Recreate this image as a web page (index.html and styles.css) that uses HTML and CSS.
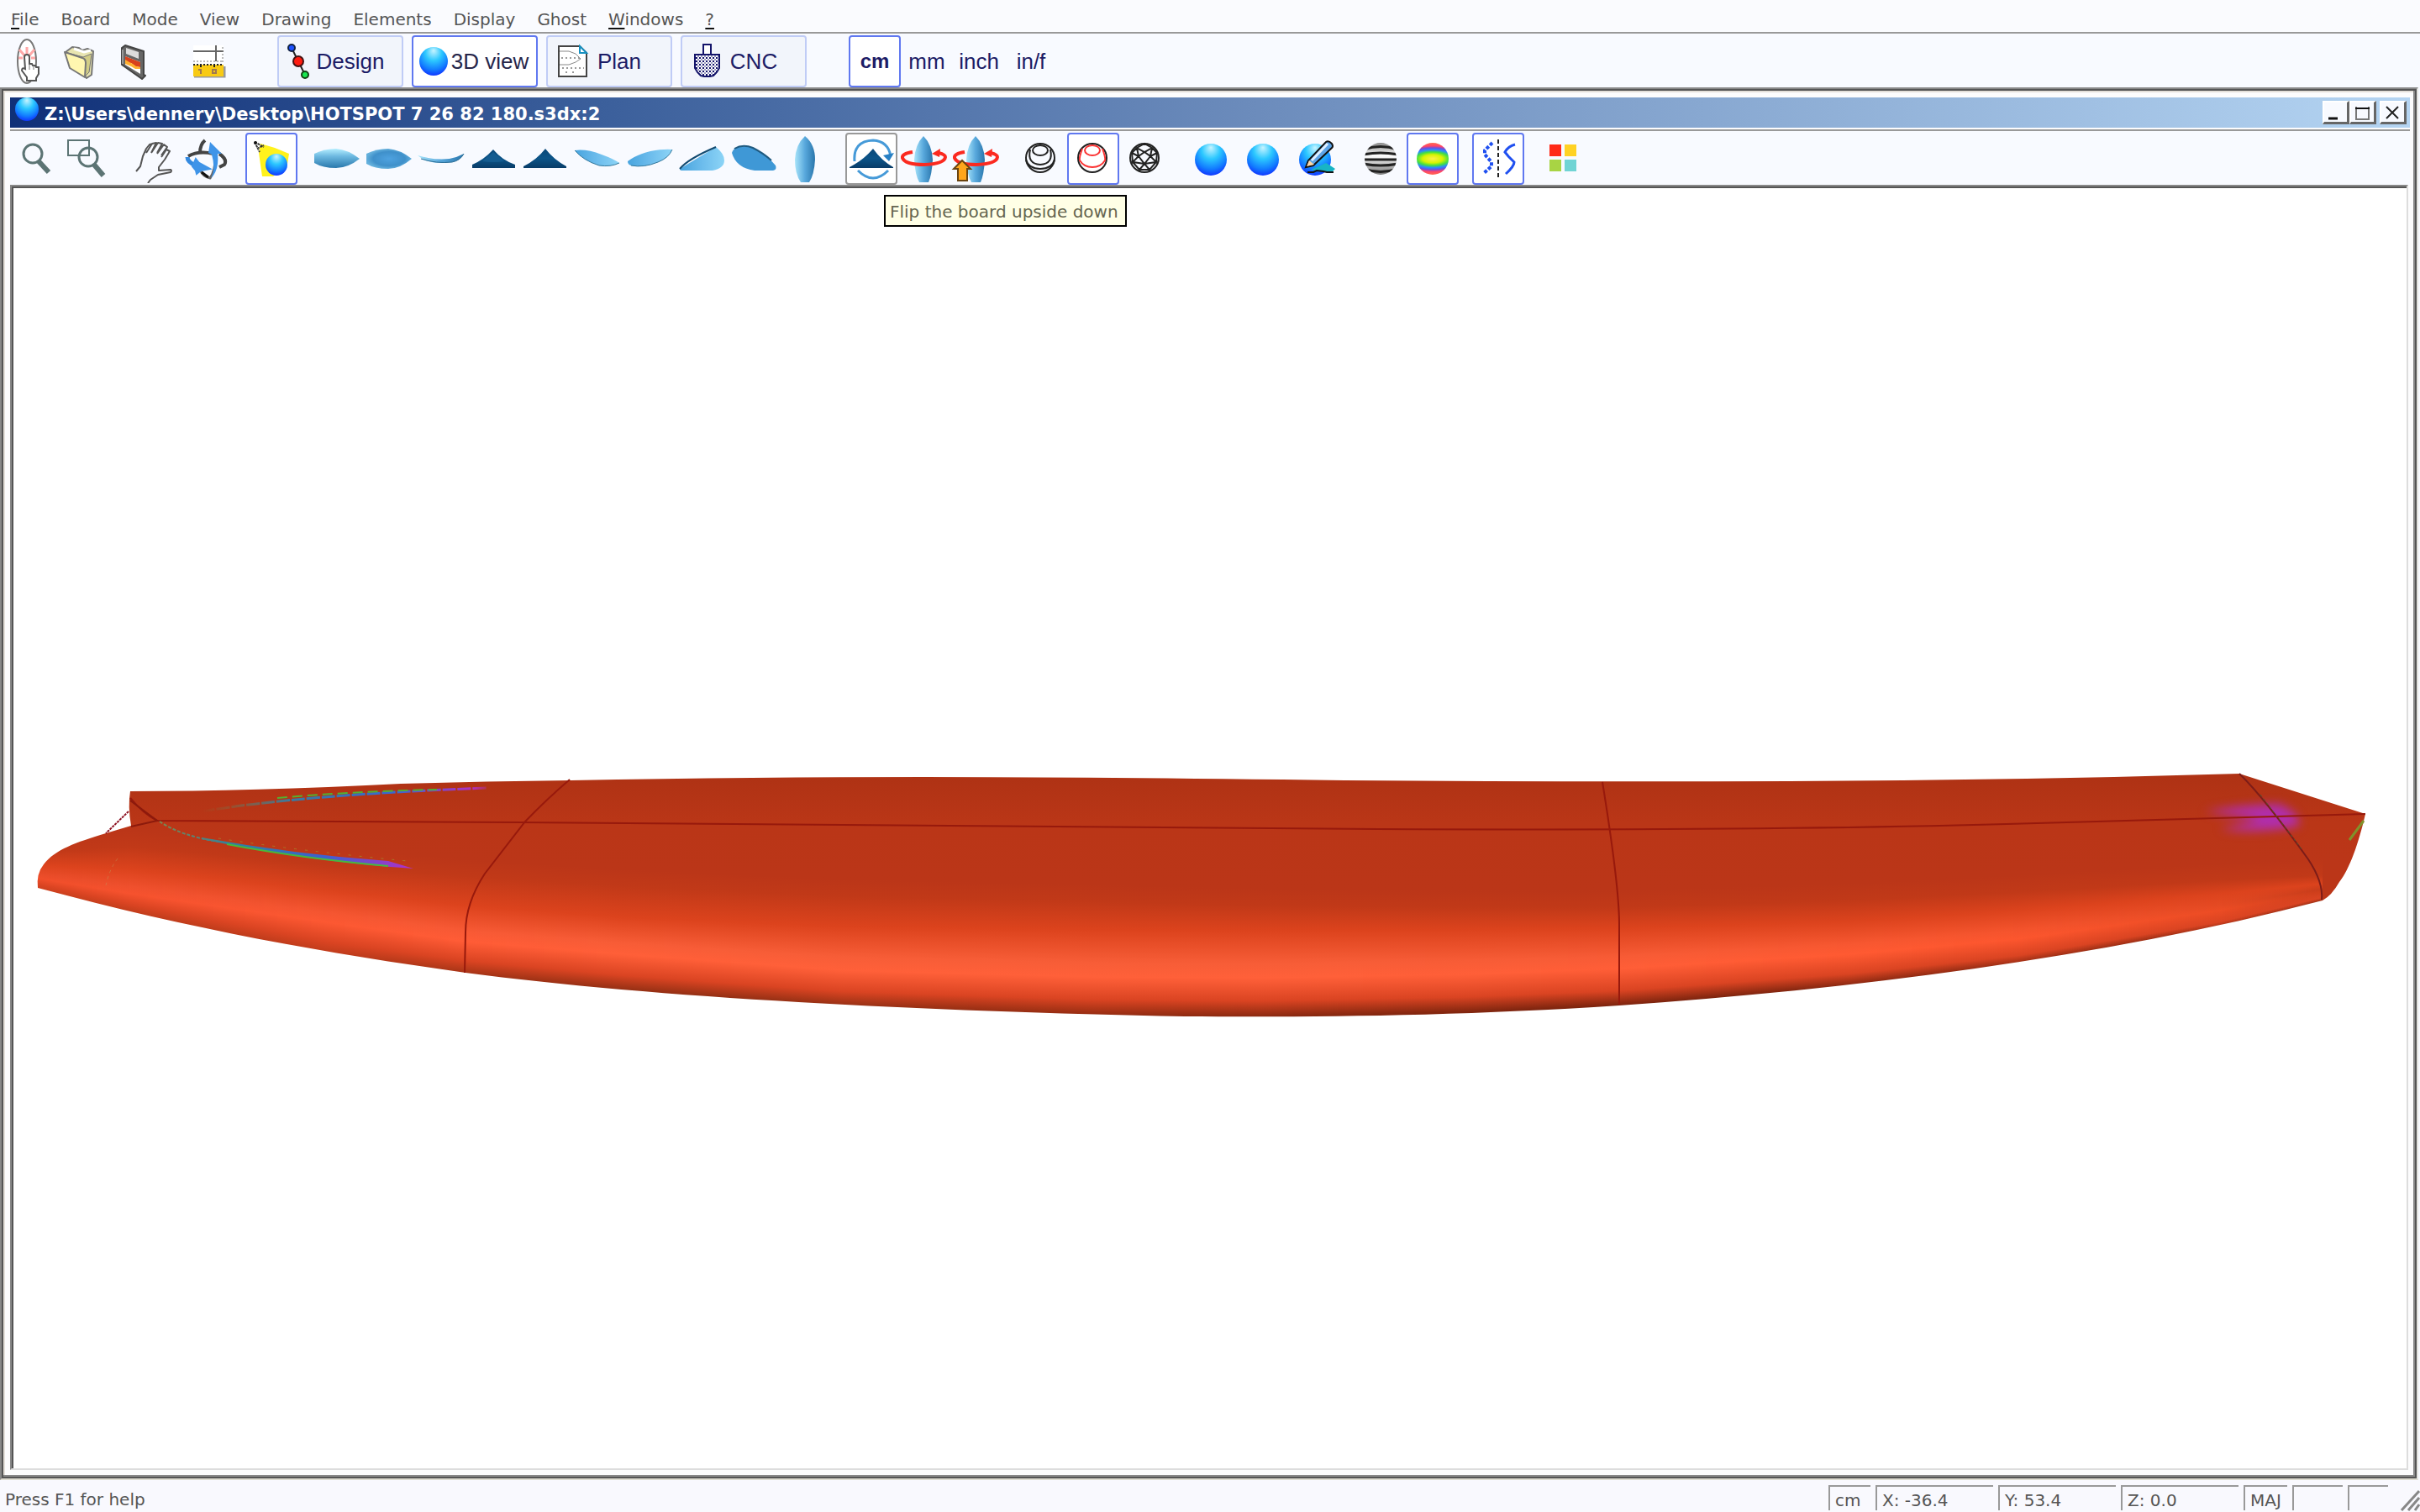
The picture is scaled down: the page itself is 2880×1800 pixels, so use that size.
FILE: index.html
```html
<!DOCTYPE html>
<html lang="en">
<head>
  <meta charset="UTF-8" />
  <title>Board Designer</title>
  <link rel="stylesheet" href="styles.css">
</head>
<body>

<!-- Shared gradients and shapes -->
<svg class="defs" aria-hidden="true">
  <defs>
    <radialGradient id="gBall" cx="50%" cy="30%" r="72%" fx="50%" fy="12%">
      <stop offset="0" stop-color="#c8f4ff"/><stop offset=".4" stop-color="#2cc8ff"/>
      <stop offset=".75" stop-color="#127cff"/><stop offset="1" stop-color="#1030ff"/>
    </radialGradient>
    <linearGradient id="gDeck" x1="0" y1="0" x2="0" y2="1">
      <stop offset="0" stop-color="#b4eeff"/><stop offset=".4" stop-color="#6cb8e0"/><stop offset="1" stop-color="#2a78ac"/>
    </linearGradient>
    <radialGradient id="gBottom">
      <stop offset="0" stop-color="#4ea2e0"/><stop offset=".7" stop-color="#3f90ca"/><stop offset="1" stop-color="#64b0dc"/>
    </radialGradient>
    <linearGradient id="gSide" x1="0" y1="0" x2="1" y2="0">
      <stop offset="0" stop-color="#a8e4fa"/><stop offset=".5" stop-color="#58a8dc"/><stop offset="1" stop-color="#2a76ac"/>
    </linearGradient>
    <linearGradient id="gRail" x1="0" y1="0" x2="1" y2="0">
      <stop offset="0" stop-color="#48a4de"/><stop offset=".5" stop-color="#6cbcec"/><stop offset="1" stop-color="#8cd4f6"/>
    </linearGradient>
    <linearGradient id="gDark" x1="0" y1="0" x2="0" y2="1">
      <stop offset="0" stop-color="#0a4878"/><stop offset=".5" stop-color="#0c5488"/><stop offset="1" stop-color="#083c68"/>
    </linearGradient>
    <linearGradient id="gZebra" x1="0" y1="0" x2="0" y2="1">
      <stop offset="0" stop-color="#888"/><stop offset=".4" stop-color="#fff"/><stop offset="1" stop-color="#777"/>
    </linearGradient>
    <radialGradient id="gRainbow" gradientTransform="matrix(2.4 0 0 1 -.7 0)">
      <stop offset="0" stop-color="#fff04a"/><stop offset=".26" stop-color="#d8f400"/><stop offset=".42" stop-color="#44e040"/>
      <stop offset=".56" stop-color="#2a8cff"/><stop offset=".68" stop-color="#6a50e0"/><stop offset=".8" stop-color="#ff4468"/><stop offset="1" stop-color="#ff6a50"/>
    </radialGradient>
    <pattern id="pDots" width="4" height="4" patternUnits="userSpaceOnUse">
      <rect width="4" height="4" fill="#fff"/><rect width="2" height="2" fill="#14146a"/><rect x="2" y="2" width="2" height="2" fill="#9a9ac0"/>
    </pattern>
    <clipPath id="cBall"><circle cx="29" cy="29" r="19"/></clipPath>
  </defs>
</svg>

<!-- Menu -->
<nav class="menubar">
  <button><u>F</u>ile</button>
  <button>Board</button>
  <button>Mode</button>
  <button>View</button>
  <button>Drawing</button>
  <button>Elements</button>
  <button>Display</button>
  <button>Ghost</button>
  <button><u>W</u>indows</button>
  <button><u>?</u></button>
</nav>

<!-- Main toolbar -->
<div class="toolbar main-toolbar">
  <div class="group">
    <button class="tool" aria-label="New board">
      <svg viewBox="0 0 58 58">
        <ellipse cx="29" cy="29" rx="11" ry="26" fill="#fff" stroke="#777" stroke-width="2"/>
        <path d="M29 12v8M20 15l6 7M38 15l-6 7M19 25h5M34 25h5" stroke="#ffa8a8" stroke-width="3"/>
        <path d="M26 24q0-3 3-3t3 3v8h3l1 2h3l1 2h3v8l-3 5v3H29v-4l-6-8q0-4 4-2z" fill="#fff" stroke="#555" stroke-width="2"/>
        <path d="M32 32v7M37 34v5" stroke="#777" stroke-width="1"/>
      </svg>
    </button>
    <button class="tool" aria-label="Open">
      <svg viewBox="0 0 58 58">
        <path d="M13 18l8-6 8 1 4 3 6-2 7 3-2 28-6 4z" fill="#e8e4b0" stroke="#777" stroke-width="2" stroke-linejoin="round"/>
        <path d="M12 18l22 6 10-4-3 22-5 5" fill="#d2cd86" stroke="#777" stroke-width="1"/>
        <path d="M12 18l21 7q4 1 4 6l-1 17-18-11z" fill="#fff6b0" stroke="#777" stroke-width="2" stroke-linejoin="round"/>
        <path d="M23 14l12 4 8-2" fill="none" stroke="#fff" stroke-width="3"/>
      </svg>
    </button>
    <button class="tool" aria-label="Save">
      <svg viewBox="0 0 58 58">
        <path d="M18 13l4-3 22 7v28l2 1-4 4-24-17z" fill="#666" stroke="#444" stroke-width="2" stroke-linejoin="round"/>
        <path d="M23 13l15 5v8l-15-6z" fill="#dcdcdc"/>
        <path d="M22 23l18 7v14L22 33z" fill="#fff"/>
        <path d="M22 23l18 7v6l-6-1-5-4-3 0-4-2z" fill="#d8401c"/>
        <path d="M22 27l5 3 4 2 4 3 5 1v2l-6 0-5-3-7-3z" fill="#ffb030"/>
        <path d="M19 15v17" stroke="#999" stroke-width="2"/>
      </svg>
    </button>
  </div>
  <div class="group">
    <button class="tool" aria-label="Measure">
      <svg viewBox="0 0 58 58">
        <rect x="11" y="10" width="36" height="22" fill="#fff"/>
        <path d="M11 17h36M38 10v19" stroke="#666" stroke-width="2" fill="none"/>
        <path d="M11 29h36M46 12v19" stroke="#777" stroke-width="1" stroke-dasharray="2 2" fill="none"/>
        <path d="M12 47h36V35" stroke="#999" stroke-width="3" fill="none"/>
        <rect x="11" y="33" width="36" height="14" fill="#f8ca14"/>
        <path d="M11 33h36" stroke="#222" stroke-width="2" stroke-dasharray="2 2"/>
        <path d="M20 33v3M36 33v3" stroke="#222" stroke-width="2"/>
        <path d="M17 39h3v5M34 39h4v4h-4z" fill="none" stroke="#a07850" stroke-width="2"/>
      </svg>
    </button>
  </div>
  <div class="group modes">
    <button class="mode">
      <svg viewBox="0 0 42 58">
        <path d="M15 13l16 32" stroke="#222" stroke-width="2"/>
        <circle cx="15" cy="13" r="4" fill="#1c50ff" stroke="#124" stroke-width="2"/>
        <circle cx="23" cy="29" r="6" fill="#ff1c10" stroke="#411" stroke-width="2"/>
        <circle cx="31" cy="45" r="4" fill="#18e850" stroke="#141" stroke-width="2"/>
      </svg>
      <span>Design</span>
    </button>
    <button class="mode active" aria-pressed="true">
      <svg viewBox="0 0 42 58"><circle cx="24" cy="29" r="17" fill="url(#gBall)"/></svg>
      <span>3D view</span>
    </button>
    <button class="mode">
      <svg viewBox="0 0 42 58">
        <path d="M13 11h25l8 8v28H13z" fill="#fff" stroke="#444" stroke-width="2"/>
        <path d="M38 11v8h8z" fill="#fff" stroke="#1890c0" stroke-width="2"/>
        <path d="M14 17h11l8 3 6 6-6 4-8 3H14" fill="none" stroke="#888" stroke-width="1"/>
        <path d="M16 25h22M17 37h26M21 42h4M29 42h4" stroke="#999" stroke-width="2" stroke-dasharray="2 3"/>
      </svg>
      <span>Plan</span>
    </button>
    <button class="mode">
      <svg viewBox="0 0 42 58">
        <path d="M15 21h29v16l-3 5-4 4-4 1h-7l-4-1-4-4-3-5z" fill="url(#pDots)" stroke="#14146a" stroke-width="2"/>
        <rect x="25" y="9" width="9" height="12" fill="#fff" stroke="#14146a" stroke-width="2"/>
      </svg>
      <span>CNC</span>
    </button>
  </div>
  <div class="group units">
    <button class="tool active" aria-pressed="true">cm</button>
    <button class="tool">mm</button>
    <button class="tool">inch</button>
    <button class="tool">in/f</button>
  </div>
</div>

<!-- Document window -->
<main class="mdi">
  <section class="window">
    <header class="titlebar">
      <svg class="title-icon" viewBox="0 0 28 28"><circle cx="14" cy="14" r="14" fill="url(#gBall)"/></svg>
      <h1>Z:\Users\dennery\Desktop\HOTSPOT 7 26 82 180.s3dx:2</h1>
      <div class="window-buttons">
        <button aria-label="Minimize"><svg viewBox="0 0 26 22"><path d="M5 18h11" stroke="#111" stroke-width="3"/></svg></button>
        <button aria-label="Maximize"><svg viewBox="0 0 26 22"><path d="M6 4v15h15V4" fill="none" stroke="#777" stroke-width="2"/><path d="M5 6h17" stroke="#111" stroke-width="2"/></svg></button>
        <button aria-label="Close"><svg viewBox="0 0 26 22"><path d="M6 4l14 14M20 4L6 18" stroke="#222" stroke-width="2"/></svg></button>
      </div>
    </header>

    <div class="toolbar view-toolbar">
      <div class="group">
        <button class="tool" aria-label="Zoom">
          <svg viewBox="0 0 58 58" fill="none" stroke="#5c7474">
            <circle cx="25" cy="23" r="11" stroke-width="3"/><path d="M32 32l12 13" stroke-width="6"/>
          </svg>
        </button>
        <button class="tool" aria-label="Zoom window">
          <svg viewBox="0 0 58 58" fill="none" stroke="#5c7474">
            <path d="M17 25H5V7h25v9" stroke-width="2"/><path d="M30 7v18H17" stroke-width="2"/>
            <circle cx="29" cy="27" r="11" stroke-width="3"/><path d="M36 36l11 13" stroke-width="6"/>
          </svg>
        </button>
      </div>
      <div class="group">
        <button class="tool" aria-label="Pan">
          <svg viewBox="0 0 58 58" fill="none" stroke="#555" stroke-width="2" stroke-linejoin="round">
            <path d="M8 44l5-6 3-12 4-9 4-5 4-1M20 22l7-11 5-1-6 12M26 22l8-12 5 1-6 11M33 23l8-11 4 3-7 10M38 27l6-9 4 2-6 10-7 9 0 4 14-1q2 1 0 3l-15 3-9 6-3 4"/>
          </svg>
        </button>
        <button class="tool" aria-label="Rotate">
          <svg viewBox="0 0 58 58" fill="none">
            <path d="M28 7q-6 5-6 15M8 26q12-7 30-3M45 23q10 7 6 13l-6 3" stroke="#444" stroke-width="4"/>
            <path d="M22 42q4 9 12 10 6-8 7-28" stroke="#666" stroke-width="3"/>
            <path d="M24 45q5 4 8 6" stroke="#111" stroke-width="3"/>
            <path d="M7 27q0 6 10 10" stroke="#348ae0" stroke-width="5"/>
            <path d="M34 9l14 14h-5q2 20-8 29 6-11 1-28l-4-2z" fill="#3f94e8"/>
            <path d="M17 29l4 5 13 7-11 2-5 4-1-4-4-5z" fill="#3f94e8" stroke="#3f94e8" stroke-width="2"/>
          </svg>
        </button>
      </div>
      <div class="group">
        <button class="tool active" aria-label="Light" aria-pressed="true">
          <svg viewBox="0 0 58 58">
            <path d="M16 11l17 5 17 7-2 12-17 15H18l-4-28z" fill="#fff21c"/>
            <path d="M9 9l11 6M9 9l6 12M12 17l8-4" stroke="#333" stroke-width="2" stroke-dasharray="3 1"/>
            <circle cx="10" cy="10" r="2" fill="#111"/>
            <circle cx="35" cy="36" r="13" fill="url(#gBall)"/>
          </svg>
        </button>
      </div>
      <div class="group">
        <button class="tool" aria-label="Top view"><svg viewBox="0 0 58 58"><path d="M2 23q12-6 26-6 14 1 28 12-14 11-28 11-16 0-26-6z" fill="url(#gDeck)"/></svg></button>
        <button class="tool" aria-label="Bottom view"><svg viewBox="0 0 58 58"><path d="M2 23q12-6 26-6 14 1 28 12-14 12-28 12-16 0-26-6z" fill="url(#gBottom)"/></svg></button>
        <button class="tool" aria-label="Side view"><svg viewBox="0 0 58 58"><path d="M1 25q28 8 46 2l9-4q-4 8-14 10-20 3-34-3z" fill="url(#gSide)"/><path d="M5 29q18 6 37 4 10-2 14-10" fill="none" stroke="#2a6c94" stroke-width="1"/></svg></button>
        <button class="tool" aria-label="Tail view"><svg viewBox="0 0 58 58"><path d="M4 36q14-6 25-18 11 13 26 18v4H4z" fill="url(#gDark)"/><path d="M16 32q14 2 26 0L29 21z" fill="#145c90"/></svg></button>
        <button class="tool" aria-label="Nose view"><svg viewBox="0 0 58 58"><path d="M3 38q16-8 26-21 10 13 25 21v2H3z" fill="url(#gDark)"/></svg></button>
        <button class="tool" aria-label="Tail perspective"><svg viewBox="0 0 58 58"><path d="M2 19q14-2 32 5 14 5 21 10-10 5-24 3Q12 31 2 19z" fill="url(#gRail)"/><path d="M2 19q10 12 29 18 14 2 24-3" fill="none" stroke="#34789c" stroke-width="1"/></svg></button>
        <button class="tool" aria-label="Nose perspective"><svg viewBox="0 0 58 58"><path d="M3 32q10-8 27-12 16-3 26-2-4 10-17 15-17 7-32 4-4-1-4-5z" fill="url(#gRail)"/><path d="M7 37q15 3 32-4 13-5 17-15" fill="none" stroke="#34789c" stroke-width="1"/></svg></button>
        <button class="tool" aria-label="Deck perspective"><svg viewBox="0 0 58 58"><path d="M3 41L46 15q10 8 10 16 0 9-14 12H6q-3 0-3-2z" fill="url(#gRail)"/><path d="M3 41q10-12 43-26" fill="none" stroke="#124a70" stroke-width="2"/></svg></button>
        <button class="tool" aria-label="Bottom perspective"><svg viewBox="0 0 58 58"><path d="M3 22q2-8 16-8 19 3 36 23 2 5-3 6H30Q8 40 3 22z" fill="#3f98d6"/><path d="M6 17q10-6 22-1 12 6 22 15" fill="none" stroke="#1f5a80" stroke-width="2"/></svg></button>
        <button class="tool" aria-label="Vertical view"><svg viewBox="0 0 58 58"><path d="M28 2q12 10 12 28-1 18-7 27H23q-7-10-7-27Q17 12 28 2z" fill="url(#gSide)"/></svg></button>
      </div>
      <div class="group">
        <button class="tool hover" aria-label="Flip the board upside down" aria-describedby="flipTip">
          <svg viewBox="0 0 58 58">
            <path d="M9 32Q7 8 31 7q18 1 21 19M13 43q18 18 36 0" fill="none" stroke="#469ad8" stroke-width="3"/>
            <path d="M43 25l7 7 6-10z" fill="#2880c4"/>
            <path d="M3 39q16-8 28-22 10 14 24 22v1H3z" fill="url(#gDark)"/>
          </svg>
          <span class="tooltip" id="flipTip" role="tooltip">Flip the board upside down</span>
        </button>
        <button class="tool" aria-label="Rotate board">
          <svg viewBox="0 0 58 58">
            <path d="M29 2q10 10 11 28-1 18-5 27H24q-5-9-6-27Q19 12 29 2z" fill="url(#gSide)"/>
            <path d="M16 21Q3 23 4 28q3 8 26 8 24-1 25-9 0-3-8-5" fill="none" stroke="#fb2a20" stroke-width="4"/>
            <path d="M39 23l10-6-1 10z" fill="#fb2a20"/>
          </svg>
        </button>
        <button class="tool" aria-label="Rotate board up">
          <svg viewBox="0 0 58 58">
            <path d="M29 2q10 10 11 28-1 18-5 27H24q-5-9-6-27Q19 12 29 2z" fill="url(#gSide)"/>
            <path d="M16 21Q3 23 4 28q3 8 26 8 24-1 25-9 0-3-8-5" fill="none" stroke="#fb2a20" stroke-width="4"/>
            <path d="M39 23l10-6-1 10z" fill="#fb2a20"/>
            <path d="M13 31l10 10h-4v14H8V41H3z" fill="#ffa61c" stroke="#6a4410" stroke-width="2"/>
          </svg>
        </button>
      </div>
      <div class="group">
        <button class="tool" aria-label="Outline">
          <svg viewBox="0 0 58 58" fill="none" stroke="#222" stroke-width="2">
            <circle cx="28" cy="28" r="17"/><ellipse cx="28" cy="19" rx="9" ry="6"/><path d="M16 18q-4 17 12 18 16-1 12-18M11 30q3 11 17 11t17-11"/>
          </svg>
        </button>
        <button class="tool active" aria-label="Slices" aria-pressed="true">
          <svg viewBox="0 0 58 58" fill="none" stroke="#222" stroke-width="2">
            <circle cx="28" cy="28" r="17"/><g stroke="#fb3434"><ellipse cx="28" cy="19" rx="9" ry="6"/><path d="M16 17q-4 11 -3 14 5 8 15 8t15-8q1-3-3-14"/></g>
          </svg>
        </button>
        <button class="tool" aria-label="Mesh">
          <svg viewBox="0 0 58 58" fill="none" stroke="#222" stroke-width="2">
            <circle cx="28" cy="28" r="17"/><path d="M28 11l-9 5 9 5 9-5zM19 16l-6 6 1 11 7-7-2-10M37 16l6 6-1 11-7-7 2-10M21 26l7-5 7 5-7 9zM13 22l8 4M43 22l-8 4M14 33l8 9 6-7 6 7 8-9-14 2zM22 42h12"/>
          </svg>
        </button>
      </div>
      <div class="group">
        <button class="tool" aria-label="Smooth shading"><svg viewBox="0 0 58 58"><circle cx="29" cy="30" r="19" fill="url(#gBall)"/></svg></button>
        <button class="tool" aria-label="Flat shading"><svg viewBox="0 0 58 58"><circle cx="29" cy="30" r="19" fill="url(#gBall)"/></svg></button>
        <button class="tool" aria-label="Paint">
          <svg viewBox="0 0 58 58">
            <circle cx="29" cy="30" r="19" fill="url(#gBall)"/>
            <path d="M24 42q10-4 18-8l5 3 6 4-4 4-8 0z" fill="#18b4c4"/>
            <path d="M20 45h7l4-2 8 1 4 1h8" fill="none" stroke="#111" stroke-width="2"/>
            <path d="M18 39l3-8 21-22q3-2 7 2 2 3 0 5L27 37z" fill="#5ca4e8" stroke="#111" stroke-width="2"/>
            <path d="M25 31l19-20" stroke="#e0f0ff" stroke-width="3"/>
            <path d="M19 38l3-7 6 5z" fill="#ffd8a4"/>
          </svg>
        </button>
      </div>
      <div class="group">
        <button class="tool" aria-label="Zebra">
          <svg viewBox="0 0 58 58">
            <g clip-path="url(#cBall)">
              <rect x="10" y="10" width="38" height="38" fill="url(#gZebra)"/>
              <path d="M8 18q21-7 42 0M8 24q21-4 42 0M8 30h42M8 35q21 4 42 0M8 41q21 7 42 0" fill="none" stroke="#222" stroke-width="3"/>
            </g>
          </svg>
        </button>
        <button class="tool active" aria-label="Curvature" aria-pressed="true"><svg viewBox="0 0 58 58"><circle cx="29" cy="29" r="19" fill="url(#gRainbow)"/></svg></button>
      </div>
      <div class="group">
        <button class="tool active" aria-label="Symmetry" aria-pressed="true">
          <svg viewBox="0 0 58 58" fill="none">
            <path d="M22 10l-9 9v5l8 9v5l-9 8" stroke="#2050f0" stroke-width="4" stroke-dasharray="4 2"/>
            <path d="M29 6v46" stroke="#222" stroke-width="2" stroke-dasharray="5 3"/>
            <path d="M49 12q-8 2-12 9l4 5 7 7q0 5-10 14" stroke="#2050f0" stroke-width="3"/>
          </svg>
        </button>
      </div>
      <div class="group">
        <button class="tool" aria-label="Colors">
          <svg viewBox="0 0 58 58">
            <rect x="12" y="12" width="14" height="14" fill="#ff2a18"/><rect x="30" y="12" width="14" height="14" fill="#ffd224"/>
            <rect x="12" y="30" width="14" height="14" fill="#a8d444"/><rect x="30" y="30" width="14" height="14" fill="#70d4d4"/>
          </svg>
        </button>
      </div>
    </div>

    <div class="viewport">
      <canvas id="board" width="2848" height="1524" aria-label="3D view of the board"></canvas>
    </div>
  </section>
</main>

<!-- Status bar -->
<footer class="statusbar">
  <span class="help">Press F1 for help</span>
  <span class="panel unit">cm</span>
  <span class="panel coord">X: -36.4</span>
  <span class="panel coord">Y: 53.4</span>
  <span class="panel coord">Z: 0.0</span>
  <span class="panel caps">MAJ</span>
  <span class="panel num"></span>
  <span class="panel scroll"></span>
  <svg class="grip" viewBox="0 0 32 32"><path d="M10 31L31 8M18 31l13-15M26 31l5-7" stroke="#888" stroke-width="3"/></svg>
</footer>

<script src="board.js"></script>
</body>
</html>
```

FILE: board.js
```js
const canvas = document.getElementById('board');
const ctx = canvas.getContext('2d');

// x, end of flat deck, start of rail, highlight, bottom edge, rail edge colour, highlight colour
const ribs = [
  [46, 1014, 1030, 1046, 1058, [205, 65, 30], [240, 78, 42]],
  [155, 1008, 1035, 1064, 1085, [195, 62, 28], [246, 82, 46]],
  [388, 1030, 1060, 1098, 1137, [185, 58, 26], [252, 88, 50]],
  [554, 1043, 1078, 1121, 1159, [165, 52, 22], [255, 92, 54]],
  [740, 1055, 1092, 1136, 1178, [150, 48, 20], [255, 95, 56]],
  [1000, 1067, 1103, 1155, 1197, [150, 48, 20], [255, 96, 57]],
  [1300, 1073, 1107, 1163, 1208, [150, 45, 18], [255, 96, 57]],
  [1500, 1078, 1108, 1164, 1210, [140, 42, 17], [255, 96, 57]],
  [1740, 1080, 1107, 1160, 1205, [130, 38, 15], [255, 95, 56]],
  [1927, 1080, 1105, 1153, 1197, [125, 36, 14], [255, 94, 55]],
  [2200, 1072, 1097, 1136, 1175, [125, 36, 14], [255, 90, 50]],
  [2400, 1062, 1084, 1118, 1151, [125, 36, 14], [252, 86, 46]],
  [2640, 1048, 1064, 1084, 1107, [125, 36, 14], [236, 76, 36]],
  [2764, 1042, 1052, 1061, 1073, [140, 42, 17], [205, 62, 27]]
];

function rgb(c) {
  return `rgb(${c.map(Math.round).join(',')})`;
}

function ribAt(x) {
  let i = 0;
  while (i < ribs.length - 2 && x > ribs[i + 1][0]) i++;
  const a = ribs[i], b = ribs[i + 1];
  const t = Math.min(1, Math.max(0, (x - a[0]) / (b[0] - a[0])));
  return a.map((v, k) => Array.isArray(v)
    ? v.map((c, n) => c + (b[k][n] - c) * t)
    : v + (b[k] - v) * t);
}

function line(d, color, width = 2, dash = []) {
  ctx.strokeStyle = color;
  ctx.lineWidth = width;
  ctx.setLineDash(dash);
  ctx.stroke(new Path2D(d));
  ctx.setLineDash([]);
}

function drawBoard() {
  ctx.translate(-16, -224);

  const outline = new Path2D(`M155 942 Q300 942 477 933 Q580 930 680 929 Q900 925 1100 925
    Q1300 925 1600 929 Q1850 931 2130 930 Q2400 929 2665 921 L2815 969
    C2807 1004 2796 1035 2784 1050 Q2775 1066 2764 1072
    C2500 1141 2200 1178 1927 1197 C1730 1210 1560 1211 1410 1210
    C1100 1204 780 1188 554 1158 C390 1135 230 1107 45 1057
    Q43 1040 52 1029 C66 1011 90 1003 126 992 L156 983 Q152 960 155 942 Z`);

  ctx.save();
  ctx.clip(outline);
  for (let x = 40; x < 2820; x += 2) {
    const [, deck, rail, peak, edge, edgeColor, peakColor] = ribAt(x);
    const g = ctx.createLinearGradient(0, 920, 0, 1220);
    const stop = (y, c) => g.addColorStop((y - 920) / 300, rgb(c));
    stop(920, [174, 50, 20]);
    stop(980, [186, 54, 23]);
    stop(deck - 20, [187, 54, 24]);
    if (x < 2764) {
      stop(deck, [193, 57, 24]);
      stop(rail, [220, 67, 29]);
      stop(peak - (peak - rail) * 0.3, peakColor.map(c => c * 0.97));
      stop(peak, peakColor);
      stop(peak + (edge - peak) * 0.6, [218, 68, 34]);
      stop(edge, edgeColor);
    }
    ctx.fillStyle = g;
    ctx.fillRect(x, 910, 2, 310);
  }

  // purple spots on the nose
  ctx.filter = 'blur(6px)';
  ctx.fillStyle = 'rgba(176, 45, 180, 0.95)';
  ctx.fill(new Path2D('M2624 966 Q2670 958 2712 957 Q2738 968 2736 983 Q2690 993 2642 987 L2690 976 Z'));
  ctx.filter = 'none';
  ctx.restore();

  // stringer and ribs
  line('M155 950 Q170 968 187 977 L620 979 Q1150 985 1640 987 Q2100 989 2388 981 L2815 969', '#97190c');
  line('M155 953 L187 977 L156 984', '#8c1a0c', 2);
  line('M153 966 L126 992', '#8c1020', 2, [3, 1]);
  line('M678 928 Q650 952 625 978 L577 1040 Q554 1075 554 1110 L553 1158', '#98190c');
  line('M1907 931 Q1927 1055 1927 1100 L1927 1196', '#98190c');
  line('M2665 921 Q2695 950 2747 1023 Q2765 1050 2763 1071', '#7c1c18');
  line('M2690 946 L2740 1012', '#4d5a35', 1, [3, 3]);

  // curvature colours along the swallow tail
  const upper = ctx.createLinearGradient(240, 0, 590, 0);
  upper.addColorStop(0, 'rgba(120,130,60,0)');
  upper.addColorStop(0.3, '#3a7aa0');
  upper.addColorStop(0.65, '#3868d0');
  upper.addColorStop(0.92, '#b030c0');
  upper.addColorStop(1, 'rgba(176,48,160,0)');
  line('M240 966 Q360 946 580 938', upper, 3, [16, 2]);
  line('M330 950 Q420 942 520 940', '#54b030', 2, [12, 6]);

  const lower = ctx.createLinearGradient(190, 0, 490, 0);
  lower.addColorStop(0, '#7a8850');
  lower.addColorStop(0.3, '#3080a0');
  lower.addColorStop(0.65, '#3c60d0');
  lower.addColorStop(1, '#b030c8');
  line('M190 978 Q215 995 260 1002', lower, 2, [4, 2]);
  ctx.fillStyle = lower;
  ctx.fill(new Path2D('M240 997 Q350 1017 462 1025 L492 1034 Q370 1026 240 999 Z'));
  line('M270 1005 Q360 1022 462 1031', '#48b83c', 2);
  line('M260 998 Q350 1012 485 1025', '#a87828', 1, [3, 10]);

  line('M2813 977 L2796 1000', '#80922a', 3);
  line('M140 1022 Q130 1035 126 1054', 'rgba(190,150,90,0.45)', 1, [4, 4]);
}

drawBoard();
```

FILE: styles.css
```css
* { box-sizing: border-box; }
body {
  margin: 0;
  height: 100vh;
  display: flex;
  flex-direction: column;
  background: #f8faff;
  font-family: "DejaVu Sans", sans-serif;
  font-size: 20px;
  color: #555;
  overflow: hidden;
}
button {
  font: inherit;
  color: inherit;
  background: none;
  border: none;
  padding: 0;
}
.defs { position: absolute; width: 0; height: 0; }

/* Menu */
.menubar {
  display: flex;
  height: 40px;
  padding-top: 7px;
  background: #fafbfe;
  border-bottom: 2px solid #999;
}
.menubar button { padding: 0 13px; }
.menubar u { text-underline-offset: 3px; text-decoration-color: #111; }

/* Toolbars */
.toolbar {
  display: flex;
  background: #f8faff;
}
.group { display: flex; }
.main-toolbar {
  padding: 2px 1px 0;
  height: 64px;
  font-family: "Liberation Sans", sans-serif;
  font-size: 26px;
  color: #1c1c66;
}
.main-toolbar .group { margin-right: 30px; }
.main-toolbar .group:nth-child(2) { margin-right: 51px; }
.main-toolbar .modes { gap: 10px; margin-right: 50px; }
.tool {
  position: relative;
  width: 62px;
  height: 62px;
  border: 2px solid transparent;
  border-radius: 4px;
}
.tool svg { display: block; width: 58px; height: 58px; }
.active { background: #fff; border-color: #6078f0; }
.units .active { font-size: 24px; font-weight: bold; }
.hover { background: #fff; border-color: #999; }
.mode {
  display: flex;
  align-items: center;
  width: 150px;
  height: 62px;
  padding-right: 18px;
  border: 2px solid #c0ccf6;
  border-radius: 4px;
  background: #f2f5fb;
  white-space: nowrap;
}
.mode svg { flex: none; width: 42px; height: 58px; overflow: visible; }
.mode span { flex: 1; min-width: 0; text-align: center; }
.mode.active { padding-right: 6px; background: #fff; border-color: #6078f0; color: #26264a; }
.view-toolbar {
  height: 66px;
  padding-top: 2px;
  border-top: 2px solid #999;
  gap: 16px;
}

/* Document window */
.mdi {
  flex: 1;
  min-height: 0;
  display: flex;
  margin-right: 2px;
  border: 2px solid #888;
  border-right-color: #e4e4e0;
  border-bottom-color: #dddbd0;
}
.window {
  flex: 1;
  min-width: 0;
  display: flex;
  flex-direction: column;
  padding: 8px 6px 8px 8px;
  background: #fcfcfd;
  border: 2px solid #555;
  box-shadow: inset -2px -2px #888, inset 2px 2px #e4e0da;
}
.titlebar {
  flex: none;
  display: flex;
  align-items: center;
  height: 36px;
  margin-bottom: 2px;
  padding: 0 4px 0 6px;
  background: linear-gradient(to right, #103078, #3c609c 25%, #6c8cbc 52%, #b4d4f2);
}
.title-icon { width: 28px; height: 28px; margin-bottom: 8px; }
.titlebar h1 {
  flex: 1;
  margin: 4px 0 0 7px;
  font-size: 21px;
  color: #fff;
}
.window-buttons { display: flex; }
.window-buttons button {
  width: 32px;
  height: 28px;
  background: #f8faff;
  border: 2px solid #fff;
  border-right: 3px solid #666;
  border-bottom: 3px solid #666;
}
.window-buttons button:last-child { margin-left: 4px; }
.window-buttons svg { display: block; width: 26px; height: 22px; }
.viewport {
  flex: 1;
  min-height: 0;
  margin-right: 2px;
  background: #fff;
  border: 2px solid #888;
  border-right-color: #ddd;
  border-bottom-color: #ddd;
  box-shadow: inset 2px 2px #555;
  padding: 2px 0 0 2px;
}
#board { display: block; width: 100%; height: 100%; object-fit: contain; }

.tooltip {
  position: absolute;
  top: 72px;
  left: 44px;
  z-index: 2;
  height: 38px;
  padding: 0 8px 0 5px;
  line-height: 36px;
  white-space: nowrap;
  color: #666650;
  background: #ffffe6;
  border: 2px solid #000;
}

/* Status bar */
.statusbar {
  display: flex;
  align-items: center;
  gap: 6px;
  height: 38px;
  padding-top: 4px;
  background: #f9f9fe;
}
.help { flex: 1; padding: 4px 0 0 6px; }
.panel {
  height: 30px;
  padding: 2px 0 0 6px;
  line-height: 28px;
  border-top: 2px solid #999;
  border-left: 2px solid #999;
}
.unit { width: 50px; }
.coord { width: 140px; }
.caps { width: 52px; }
.num { width: 60px; }
.scroll { width: 48px; }
.grip { width: 32px; height: 32px; }
```
